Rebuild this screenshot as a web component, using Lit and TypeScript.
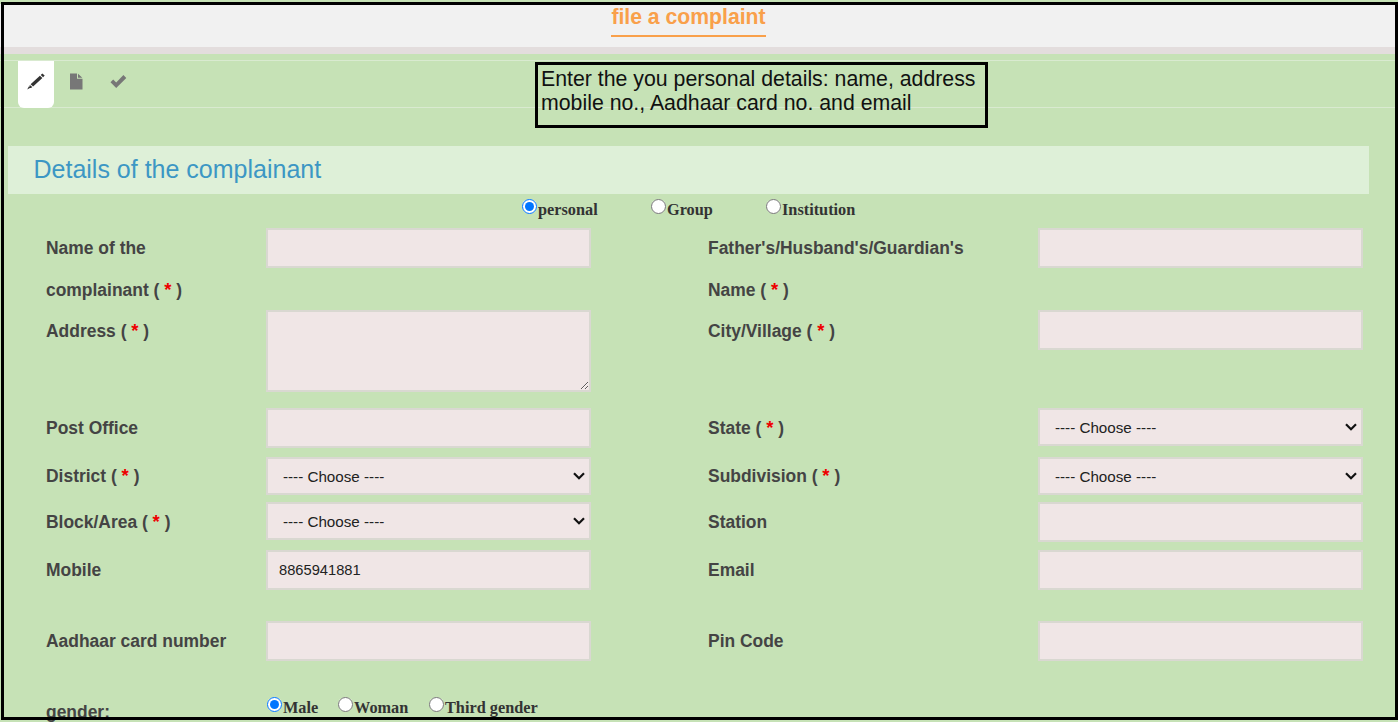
import { LitElement, html, css } from "lit";
import { customElement } from "lit/decorators.js";

const req = html`( <span class="star">*</span> )`;

@customElement("app-root")
export class AppRoot extends LitElement {
  static styles = css`
    :host { display: block; width: 1398px; height: 722px; position: relative; overflow: hidden; background: #c6e2b6; font-family: "Liberation Sans", Arial, sans-serif; }
    .frame { position: absolute; left: 1px; top: 2px; width: 1391px; height: 712px; border: 3px solid #000; pointer-events: none; }
    .top { height: 43px; margin-top: 4px; background: #f1f1f1; display: flex; justify-content: center; }
    .title { margin-left: -21px; height: 33px; box-sizing: border-box; padding-top: 1px; font-size: 21.2px; line-height: 23px; font-weight: 700; color: #f9a04a; border-bottom: 2px solid #f9a04a; }
    .strip { height: 7px; background: #e3dddd; }
    .tabs { margin-top: 6px; border-top: 1px solid #d9ead0; border-bottom: 1px solid #d9ead0; display: flex; padding-left: 18px; height: 46px; }
    .tab { width: 36px; height: 47px; display: flex; align-items: flex-start; justify-content: center; padding-top: 12px; box-sizing: border-box; margin-right: 6px; }
    .tab.on { background: #fff; border-radius: 0 0 6px 6px; margin-right: 4px; }
    .check { margin-top: 1px; }
    .note { position: absolute; left: 535px; top: 62px; width: 453px; height: 66px; box-sizing: border-box; border: 3px solid #000; padding: 2px 0 0 3px; font-size: 21.3px; line-height: 24px; color: #111; }
    .heading { margin: 38px 29px 0 8px; height: 48px; box-sizing: border-box; background: #def0d8; color: #3c97c4; font-size: 25px; line-height: 47px; padding-left: 25.5px; }
    .types { display: flex; margin-top: 5px; padding-left: 522px; height: 29px; }
    .radio { display: flex; align-items: flex-start; font-family: "Liberation Serif", serif; font-weight: 700; font-size: 16.3px; color: #333; line-height: 18px; }
    .radio input { margin: 0; width: 15px; height: 15px; flex: none; }
    .radio span { margin-top: 2px; margin-left: 1px; }
    .types .radio:nth-child(1) { width: 129px; }
    .types .radio:nth-child(2) { width: 115px; }
    .form { display: grid; grid-template-columns: 220px 325px 117px 330px 325px; grid-template-rows: 82px 98px 49px 45px 48px 71px 72px; margin-left: 46px; }
    .lab { font-size: 17.45px; font-weight: 700; color: #444; line-height: 42px; margin-top: -1px; }
    .lab.hi { margin-top: -2px; }
    .lab.low { margin-top: 0; }
    .star { color: #e00; font-size: 18.5px; }
    .fld { box-sizing: border-box; width: 325px; height: 40px; border: 2px solid #d9d8d1; background: #f0e6e6; margin: 0; outline: none; padding: 0 11px; font-family: "Liberation Sans", Arial, sans-serif; font-size: 14.7px; color: #222; display: block; border-radius: 0; }
    textarea.fld { height: 82px; }
    select.fld {
      height: 38px; padding: 0 15px; font-size: 15.2px; appearance: none;
      background-image: url("data:image/svg+xml,%3Csvg xmlns='http://www.w3.org/2000/svg' width='12' height='8'%3E%3Cpath d='M1 1.2l5 5 5-5' fill='none' stroke='%23111' stroke-width='2.2'/%3E%3C/svg%3E");
      background-repeat: no-repeat; background-position: right 4px center;
    }
    .genders { display: flex; margin: 4px 0 0 1px; }
    .genders .radio:nth-child(1) { width: 71px; }
    .genders .radio:nth-child(2) { width: 91px; }
  `;

  private chooser() {
    return html`<select class="fld"><option>---- Choose ----</option></select>`;
  }

  render() {
    return html`
      <div class="top"><div class="title">file a complaint</div></div>
      <div class="strip"></div>
      <div class="tabs">
        <div class="tab on"><svg width="18" height="17" viewBox="0 0 18 17"><path fill="#333" d="M15.3 0.4l2.4 2.1-1.6 1.7-2.4-2.1zM12.9 2.8l2.5 2.2-9.3 8.4-2.5-2.2zM2.8 11.9l2.5 2.2-1.2 1-1.9-.7zM1.8 13.4l1.6 1.4-3.2 1.7z"/></svg></div>
        <div class="tab"><svg width="13" height="17" viewBox="0 0 13 17"><path fill="#777" d="M0 0.5h7v5.2h5.5v10.8H0zM8 0.8l4.3 3.9H8z"/></svg></div>
        <div class="tab"><svg class="check" width="17" height="15" viewBox="0 0 17 15"><path fill="#777" d="M0.5 8.2l2.7-2.7 3 3 7.2-7.4 2.9 2.8-10.1 10.2z"/></svg></div>
      </div>
      <div class="note">Enter the you personal details: name, address<br />mobile no., Aadhaar card no. and email</div>
      <div class="heading">Details of the complainant</div>
      <div class="types">
        <label class="radio"><input type="radio" name="t" checked /><span>personal</span></label>
        <label class="radio"><input type="radio" name="t" /><span>Group</span></label>
        <label class="radio"><input type="radio" name="t" /><span>Institution</span></label>
      </div>
      <div class="form">
        <div class="lab">Name of the<br />complainant ${req}</div><input class="fld" /><div></div>
        <div class="lab">Father's/Husband's/Guardian's<br />Name ${req}</div><input class="fld" />
        <div class="lab low">Address ${req}</div><textarea class="fld"></textarea><div></div>
        <div class="lab low">City/Village ${req}</div><input class="fld" />
        <div class="lab">Post Office</div><input class="fld" /><div></div>
        <div class="lab">State ${req}</div>${this.chooser()}
        <div class="lab hi">District ${req}</div>${this.chooser()}<div></div>
        <div class="lab hi">Subdivision ${req}</div>${this.chooser()}
        <div class="lab">Block/Area ${req}</div>${this.chooser()}<div></div>
        <div class="lab">Station</div><input class="fld" />
        <div class="lab">Mobile</div><input class="fld" value="8865941881" /><div></div>
        <div class="lab">Email</div><input class="fld" />
        <div class="lab">Aadhaar card number</div><input class="fld" /><div></div>
        <div class="lab">Pin Code</div><input class="fld" />
        <div class="lab hi">gender:</div>
        <div class="genders">
          <label class="radio"><input type="radio" name="g" checked /><span>Male</span></label>
          <label class="radio"><input type="radio" name="g" /><span>Woman</span></label>
          <label class="radio"><input type="radio" name="g" /><span>Third gender</span></label>
        </div>
      </div>
      <div class="frame"></div>
    `;
  }
}
